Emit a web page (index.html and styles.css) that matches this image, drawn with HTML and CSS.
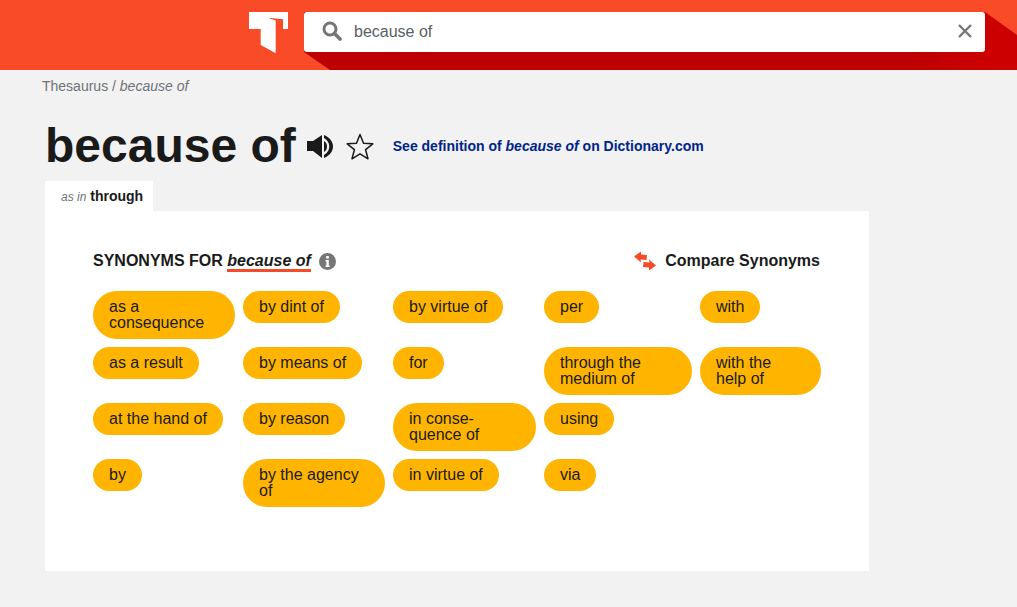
FILE: index.html
```html
<!DOCTYPE html>
<html lang="en">
<head>
    <meta charset="UTF-8">
    <meta name="viewport" content="width=device-width, initial-scale=1.0">
    <title>because of - Thesaurus</title>
    <link rel="stylesheet" href="styles.css">
</head>
<body>

<header class="top-bar">
    <div class="top-shade"></div>
    <svg class="logo" width="40" height="42" viewBox="0 0 40 42">
        <path fill="#fff" d="M0 0H39V17H34V7.300L18.700 5.700L26.700 8.500V41.300L11.700 33V17H0Z"/>
    </svg>
    <div class="search-box">
        <svg class="search-icon" width="20" height="20" viewBox="0 0 20 20">
            <circle cx="8" cy="8" r="6" fill="none" stroke="#767676" stroke-width="3"/>
            <path d="M12.500 12.500L18 18" stroke="#767676" stroke-width="3.600" stroke-linecap="round"/>
        </svg>
        <span class="search-text">because of</span>
        <svg class="clear-icon" width="16" height="16" viewBox="0 0 16 16">
            <path d="M2 2L14 14M14 2L2 14" stroke="#767676" stroke-width="2.400"/>
        </svg>
    </div>
</header>

<div class="breadcrumb">Thesaurus / <em>because of</em></div>

<div class="title-row">
    <h1>because of</h1>
    <svg class="sound-icon" width="26" height="25" viewBox="0 0 26 25">
        <path fill="#1a1a1a" d="M0 7H6L15 1V24L6 17H0Z"/>
        <path fill="#1a1a1a" d="M17 1C29 6 29 19 17 24V21C24 17 24 8 17 4Z"/>
        <path fill="#1a1a1a" d="M17 7C21 9 21 16 17 18Z"/>
    </svg>
    <svg class="star-icon" width="28" height="27" viewBox="0 0 28 27">
        <path fill="none" stroke="#1a1a1a" stroke-width="1.500" stroke-linejoin="round" d="M14 1.500L17.500 10.200L26.800 10.800L19.600 16.700L22 25.800L14 20.800L6 25.800L8.400 16.700L1.200 10.800L10.500 10.200Z"/>
    </svg>
    <a class="definition-link">See definition of <em>because of</em> on Dictionary.com</a>
</div>

<div class="tab"><em>as in</em> <strong>through</strong></div>

<section class="panel">
    <div class="panel-head">
        <div class="panel-title">
            <span>SYNONYMS FOR <em>because of</em></span>
            <svg class="info-icon" width="17" height="17" viewBox="0 0 17 17">
                <circle cx="8.500" cy="8.500" r="8.500" fill="#767676"/>
                <rect x="7.200" y="3" width="2.600" height="2.600" fill="#fff"/>
                <path fill="#fff" d="M6.500 7H9.800V12.500H10.700V14H6.500V12.500H7.400V8.500H6.500Z"/>
            </svg>
        </div>
        <div class="compare">
            <svg class="compare-icon" width="22" height="20" viewBox="0 0 22 20">
                <path fill="#f44b29" d="M0 5.500L7 .5V3.500L13 4L12.500 9L6.500 8.500L7 11.500Z"/>
                <path fill="#f44b29" d="M22 14.500L15 19.500V16.500L9 16L9.500 11L15.500 11.500L15 8.500Z"/>
            </svg>
            Compare Synonyms
        </div>
    </div>
    <div class="synonyms">
        <a class="pill">as a consequence</a>
        <a class="pill">as a result</a>
        <a class="pill">at the hand of</a>
        <a class="pill">by</a>
        <a class="pill">by dint of</a>
        <a class="pill">by means of</a>
        <a class="pill">by reason</a>
        <a class="pill">by the agency of</a>
        <a class="pill">by virtue of</a>
        <a class="pill">for</a>
        <a class="pill">in conse-quence of</a>
        <a class="pill">in virtue of</a>
        <a class="pill">per</a>
        <a class="pill">through the medium of</a>
        <a class="pill">using</a>
        <a class="pill">via</a>
        <a class="pill">with</a>
        <a class="pill">with the help of</a>
    </div>
</section>

</body>
</html>
```

FILE: styles.css
```css
body {
    margin: 0;
    background-color: #f2f2f2;
    font-family: "Liberation Sans", Arial, sans-serif;
    color: #1a1a1a;
}
.top-bar {
    position: relative;
    display: flex;
    align-items: flex-start;
    height: 70px;
    padding: 12px 32px 0 249px;
    box-sizing: border-box;
    background-color: #f94b28;
    overflow: hidden;
}
/* dark red fold behind the search box */
.top-shade {
    position: absolute;
    inset: 0;
    background: linear-gradient(90deg, #bf0000 0, #bf0000 90%, #cc0000 97%);
    clip-path: polygon(304px 52px, 304px 12px, 985px 12px, 1017px 35px, 1017px 70px, 330px 70px);
}
.logo {
    position: relative;
    flex: none;
    margin-right: 15px;
}
.search-box {
    position: relative;
    display: flex;
    align-items: center;
    width: 681px;
    height: 40px;
    padding: 0 12px 0 18px;
    box-sizing: border-box;
    background-color: white;
    border-radius: 3px;
}
.search-icon {
    flex: none;
    margin-top: -3px;
}
.search-text {
    flex: 1;
    margin-left: 12px;
    font-size: 16px;
    color: #5a5f66;
}
.clear-icon {
    flex: none;
    margin-top: -3px;
}
.breadcrumb {
    margin: 8px 0 0 42px;
    font-size: 14px;
    line-height: 16px;
    color: #6e7278;
}
.title-row {
    display: flex;
    align-items: center;
    height: 56px;
    margin: 24px 0 0 45px;
}
h1 {
    margin: 0;
    font-size: 48px;
    line-height: 56px;
    font-weight: bold;
}
.sound-icon {
    margin-left: 11px;
}
.star-icon {
    margin-left: 13px;
}
.definition-link {
    margin-left: 19px;
    font-size: 14px;
    font-weight: bold;
    color: #00248b;
}
.tab {
    width: 108px;
    height: 30px;
    margin: 7px 0 0 45px;
    padding-left: 16px;
    box-sizing: border-box;
    background-color: white;
    font-size: 14px;
    line-height: 31px;
    white-space: nowrap;
}
.tab em {
    font-size: 12px;
    color: #6e7278;
}
.panel {
    width: 824px;
    height: 360px;
    margin-left: 45px;
    padding: 40px 49px 0 48px;
    box-sizing: border-box;
    background-color: white;
}
.panel-head {
    display: flex;
    justify-content: space-between;
    align-items: center;
    height: 20px;
}
.panel-title {
    display: flex;
    align-items: center;
    font-size: 16px;
    line-height: 18px;
    font-weight: bold;
}
.panel-title em {
    border-bottom: 3px solid #f44b29;
}
.info-icon {
    margin-left: 8px;
}
.compare {
    display: flex;
    align-items: center;
    font-size: 16px;
    font-weight: bold;
}
.compare-icon {
    margin-right: 9px;
}
.synonyms {
    display: grid;
    grid-auto-flow: column;
    grid-template-rows: repeat(4, 48px);
    grid-template-columns: 142px 142px 143px 148px 121px;
    gap: 8px;
    margin-top: 20px;
}
.pill {
    align-self: start;
    justify-self: start;
    padding: 8px 16px;
    background-color: #ffb500;
    border-radius: 24px;
    font-size: 16px;
    line-height: 16px;
}
```
